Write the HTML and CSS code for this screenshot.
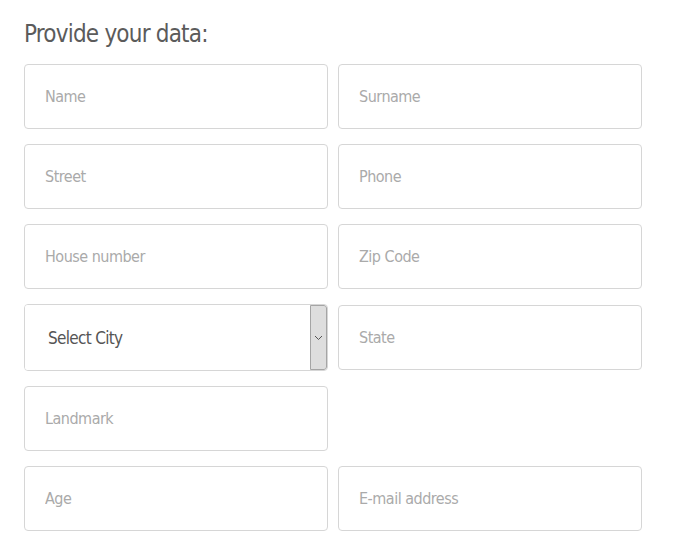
FILE: index.html
```html
<!DOCTYPE html>
<html lang="en">
<head>
	<meta charset="UTF-8">
	<title>Provide your data</title>
	<link rel="stylesheet" href="styles.css">
</head>
<body>
	<div class="wrap">
		<h2 class="title">Provide your data:</h2>
		<form class="dataForm">
			<input type="text" placeholder="Name">
			<input type="text" placeholder="Surname">
			<input type="text" placeholder="Street">
			<input type="text" placeholder="Phone">
			<input type="text" placeholder="House number">
			<input type="text" placeholder="Zip Code">
			<div class="selectBox">
				<select>
					<option>Select City</option>
				</select>
				<span class="arrow">
					<svg width="9" height="6" viewBox="0 0 9 6"><path d="M1 1 L4.5 4.5 L8 1" fill="none" stroke="#555" stroke-width="1"/></svg>
				</span>
			</div>
			<input type="text" placeholder="State">
			<input type="text" placeholder="Landmark">
			<span></span>
			<input type="text" placeholder="Age">
			<input type="text" placeholder="E-mail address">
		</form>
	</div>
</body>
</html>
```

FILE: styles.css
```css
*{margin:0; padding:0; box-sizing:border-box;}
body{background:#fff; font-family:"Liberation Sans Narrow", "DejaVu Sans", sans-serif; font-stretch:condensed;}
.wrap{padding:18px 24px 0;}
.title{font-size:24px; line-height:32px; font-weight:normal; color:#5b5b5b; letter-spacing:-0.8px; margin-bottom:14px;}

.dataForm{display:grid; grid-template-columns:304px 304px; column-gap:10px; row-gap:15px; align-items:center;}
.dataForm input{height:65px; border:1px solid #d6d6d6; border-radius:4px; padding:0 20px; font-family:inherit; font-stretch:condensed; font-size:16px; letter-spacing:-0.5px; color:#555; outline:none;}
.dataForm input::placeholder{color:#aaa;}

.selectBox{display:flex; height:67px; border:1px solid #d6d6d6; border-radius:4px; overflow:hidden;}
.selectBox select{flex:1; appearance:none; -webkit-appearance:none; border:0; background:#fff; padding-left:23px; font-family:inherit; font-stretch:condensed; font-size:17px; letter-spacing:-0.7px; color:#555; outline:none;}
.selectBox .arrow{width:17px; display:flex; align-items:center; justify-content:center; background:#dedede; border:1px solid #a5a5a5; border-radius:0 3px 3px 0;}
```
